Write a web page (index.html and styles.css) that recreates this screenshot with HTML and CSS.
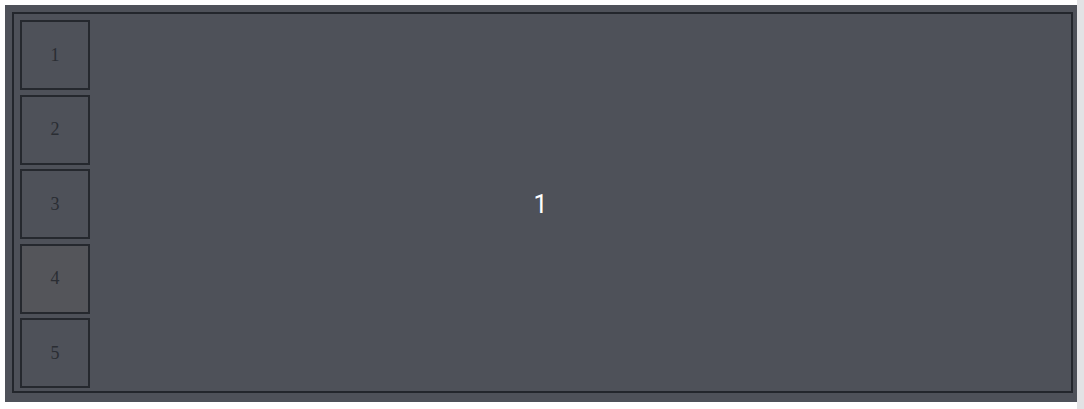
FILE: index.html
```html
<!DOCTYPE html>
<html>
<head>
<meta charset="utf-8">
<link rel="stylesheet" href="styles.css">
</head>
<body>
<div class="frame">
  <div class="viewer">
    <div class="slide">1</div>
    <div class="thumbs">
      <div class="thumb">1</div>
      <div class="thumb">2</div>
      <div class="thumb">3</div>
      <div class="thumb thumb-hover">4</div>
      <div class="thumb">5</div>
    </div>
  </div>
</div>
</body>
</html>
```
FILE: styles.css
```css
html {
  background: linear-gradient(to right, #ffffff 1077px, #e2e2e4 1077px);
  height: 100%;
}
body {
  margin: 5px 0 0 5px;
  width: 1072px;
}
.frame {
  box-sizing: border-box;
  width: 1072px;
  height: 397px;
  background: #4e5159;
  padding: 7px 4px 9px 7px;
}
.viewer {
  box-sizing: border-box;
  height: 100%;
  border: 2px solid #23262c;
  display: grid;
}
.slide,
.thumbs {
  grid-area: 1 / 1;
}
.slide {
  display: flex;
  align-items: center;
  justify-content: center;
  color: #ffffff;
  font-family: Roboto, "Liberation Sans", Arial, sans-serif;
  font-size: 25px;
  padding: 4px 4px 0 0;
}
.thumbs {
  display: flex;
  flex-direction: column;
  justify-content: space-between;
  padding: 6px 0 3px 6px;
  width: 70px;
}
.thumb {
  box-sizing: border-box;
  width: 70px;
  height: 70px;
  border: 2px solid #25282e;
  display: flex;
  align-items: center;
  justify-content: center;
  font-family: "Liberation Serif", "DejaVu Serif", "Times New Roman", serif;
  font-size: 18px;
  color: #2a2d33;
  background: #4e5159;
}
.thumb-hover {
  background: #54555a;
}
```
